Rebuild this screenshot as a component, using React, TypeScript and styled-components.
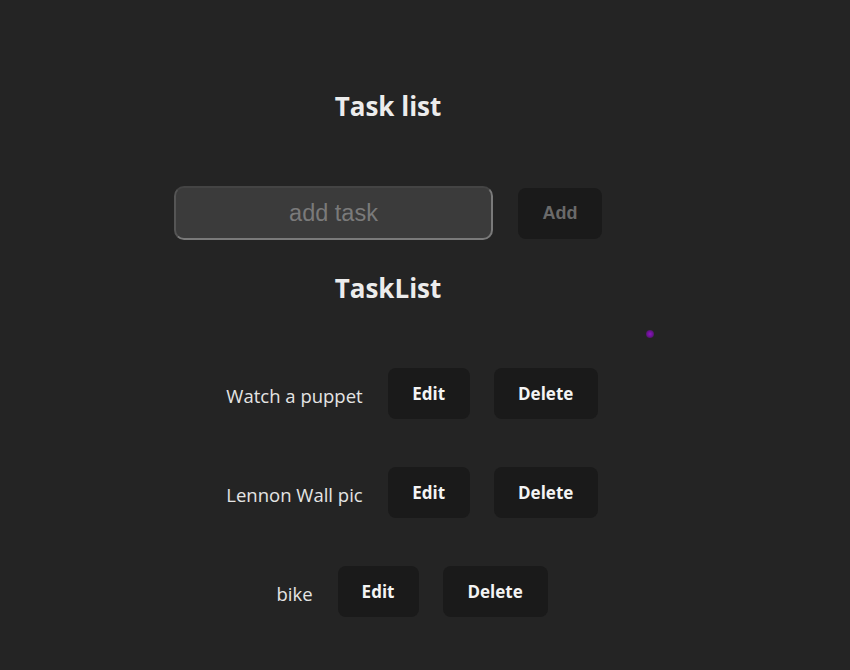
import React from "react";
import styled, { createGlobalStyle } from "styled-components";

const Global = createGlobalStyle`
  html, body { margin: 0; padding: 0; background: #242424; }
  body {
    font-family: "Open Sans", "Noto Sans", "Liberation Sans", sans-serif;
    color: rgba(255,255,255,0.87);
    width: 850px; height: 670px; overflow: hidden;
  }
`;

const Page = styled.main`
  position: relative;
  height: 670px;
  display: flex;
  flex-direction: column;
  align-items: center;
  padding: 90px 74px 0 0;
  box-sizing: border-box;
`;

const Title = styled.h1`
  margin: 0;
  font-size: 26px;
  line-height: 32px;
  font-weight: 700;
  color: #ececec;
`;

const SubTitle = styled(Title)`
  margin-top: 32px;
`;

const Form = styled.div`
  margin-top: 64px;
  display: flex;
  align-items: center;
  gap: 25px;
`;

const Input = styled.input`
  width: 319px;
  height: 54px;
  box-sizing: border-box;
  background: #3b3b3b;
  border: 2px solid #7a7a7a;
  border-top-color: #444;
  border-left-color: #555;
  border-radius: 10px;
  font-family: "Liberation Sans", Arial, sans-serif;
  font-size: 23.5px;
  text-align: center;
  color: #ddd;
  outline: none;
  &::placeholder { color: #7a7a7a; }
`;

const Button = styled.button<{ $w: number; $muted?: boolean }>`
  width: ${(p) => p.$w}px;
  height: 51px;
  border: none;
  border-radius: 8px;
  background: #1a1a1a;
  color: ${(p) => (p.$muted ? "#6a6a6a" : "#f4f4f4")};
  font-family: ${(p) =>
    p.$muted ? '"Liberation Sans", Arial, sans-serif' : '"Open Sans", "Noto Sans", sans-serif'};
  font-size: ${(p) => (p.$muted ? "18px" : "17px")};
  font-weight: 700;
  padding: 0;
  cursor: pointer;
`;

const List = styled.ul`
  list-style: none;
  margin: 64px 0 0;
  padding: 0 0 0 48px;
  display: flex;
  flex-direction: column;
  gap: 48px;
  align-items: center;
`;

const Row = styled.li`
  display: flex;
  align-items: center;
`;

const TaskText = styled.span`
  font-size: 18.5px;
  color: #e4e4e4;
  margin-right: 25px;
  margin-top: 4px;
`;

const Actions = styled.div`
  display: flex;
  gap: 24px;
`;

const Dot = styled.div`
  position: absolute;
  left: 646px;
  top: 330px;
  width: 8px;
  height: 8px;
  border-radius: 50%;
  background: radial-gradient(circle, #8a17c0 0%, #6a1190 50%, rgba(80,20,110,0) 100%);
`;

const tasks = [
  { text: "Watch a puppet", edit: 82, del: 104 },
  { text: "Lennon Wall pic", edit: 82, del: 104 },
  { text: "bike", edit: 81, del: 105 },
];

export default function App() {
  return (
    <>
      <Global />
      <Page>
        <Title>Task list</Title>
        <Form>
          <Input placeholder="add task" />
          <Button $w={84} $muted>Add</Button>
        </Form>
        <SubTitle as="h2">TaskList</SubTitle>
        <List>
          {tasks.map((t) => (
            <Row key={t.text}>
              <TaskText>{t.text}</TaskText>
              <Actions>
                <Button $w={t.edit}>Edit</Button>
                <Button $w={t.del}>Delete</Button>
              </Actions>
            </Row>
          ))}
        </List>
        <Dot />
      </Page>
    </>
  );
}
